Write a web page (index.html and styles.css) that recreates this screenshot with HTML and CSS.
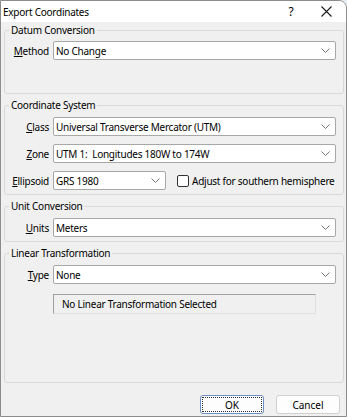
FILE: index.html
```html
<!DOCTYPE html>
<html lang="en">

<head>
    <meta charset="UTF-8">
    <meta name="viewport" content="width=device-width, initial-scale=1.0">
    <title>Export Coordinates</title>
    <link rel="stylesheet" href="styles.css">
</head>

<body>
    <div class="window">
        <div class="titlebar">
            <span class="title">Export Coordinates</span>
            <span class="help">?</span>
            <span class="close">
                <svg width="11" height="11" viewBox="0 0 11 11">
                    <path d="M0.5 0.5 L10.5 10.5 M10.5 0.5 L0.5 10.5" stroke="#1a1a1a" stroke-width="1.1" fill="none" />
                </svg>
            </span>
        </div>

        <div class="content">
            <fieldset class="group group-datum">
                <legend>Datum Conversion</legend>
                <div class="row">
                    <label><u>M</u>ethod</label>
                    <div class="combo">
                        <span>No Change</span>
                        <svg class="chev" width="9" height="5" viewBox="0 0 9 5"><path d="M0.5 0.5 L4.5 4.5 L8.5 0.5" stroke="#777" fill="none" /></svg>
                    </div>
                </div>
            </fieldset>

            <fieldset class="group">
                <legend>Coordinate System</legend>
                <div class="row">
                    <label><u>C</u>lass</label>
                    <div class="combo">
                        <span>Universal Transverse Mercator (UTM)</span>
                        <svg class="chev" width="9" height="5" viewBox="0 0 9 5"><path d="M0.5 0.5 L4.5 4.5 L8.5 0.5" stroke="#777" fill="none" /></svg>
                    </div>
                </div>
                <div class="row">
                    <label><u>Z</u>one</label>
                    <div class="combo">
                        <span>UTM 1:&nbsp; Longitudes 180W to 174W</span>
                        <svg class="chev" width="9" height="5" viewBox="0 0 9 5"><path d="M0.5 0.5 L4.5 4.5 L8.5 0.5" stroke="#777" fill="none" /></svg>
                    </div>
                </div>
                <div class="row">
                    <label><u>E</u>llipsoid</label>
                    <div class="combo combo-short">
                        <span>GRS 1980</span>
                        <svg class="chev" width="9" height="5" viewBox="0 0 9 5"><path d="M0.5 0.5 L4.5 4.5 L8.5 0.5" stroke="#777" fill="none" /></svg>
                    </div>
                    <div class="check">
                        <span class="box"></span>
                        <span>Ad<u>j</u>ust for southern hemisphere</span>
                    </div>
                </div>
            </fieldset>

            <fieldset class="group">
                <legend>Unit Conversion</legend>
                <div class="row">
                    <label><u>U</u>nits</label>
                    <div class="combo">
                        <span>Meters</span>
                        <svg class="chev" width="9" height="5" viewBox="0 0 9 5"><path d="M0.5 0.5 L4.5 4.5 L8.5 0.5" stroke="#777" fill="none" /></svg>
                    </div>
                </div>
            </fieldset>

            <fieldset class="group group-linear">
                <legend>Linear Transformation</legend>
                <div class="row">
                    <label><u>T</u>ype</label>
                    <div class="combo">
                        <span>None</span>
                        <svg class="chev" width="9" height="5" viewBox="0 0 9 5"><path d="M0.5 0.5 L4.5 4.5 L8.5 0.5" stroke="#777" fill="none" /></svg>
                    </div>
                </div>
                <div class="info">No Linear Transformation Selected</div>
            </fieldset>

            <div class="buttons">
                <button class="btn btn-default"><span>OK</span></button>
                <button class="btn">Cancel</button>
            </div>
        </div>
    </div>
</body>

</html>
```

FILE: styles.css
```css
html,
body {
    margin: 0;
    padding: 0;
    background: #e9ecef;
}

body {
    font-family: "Noto Sans", "Open Sans", sans-serif;
    font-size: 10px;
    letter-spacing: -0.25px;
    color: #000;
}

.window {
    width: 347px;
    height: 417px;
    box-sizing: border-box;
    background: #f0f0f0;
    border: 1px solid #8c8c8c;
    border-radius: 0 8px 0 0;
    display: flex;
    flex-direction: column;
    overflow: hidden;
}

.titlebar {
    height: 21px;
    background: #ffffff;
    display: flex;
    align-items: center;
    padding-left: 2px;
}

.title {
    flex: 1;
}

.help {
    width: 16px;
    text-align: center;
    margin-right: 22px;
    font-size: 12px;
}

.close {
    width: 11px;
    height: 11px;
    margin-right: 14px;
    display: flex;
}

.content {
    flex: 1;
    display: flex;
    flex-direction: column;
    padding: 0 2px 0 3px;
}

.group {
    margin: 1px 0 0 0;
    border: 1px solid #d9d9d9;
    border-radius: 3px;
    padding: 4px 7px 4px 0;
    min-width: 0;
}

.group + .group {
    margin-top: 4px;
}

.group legend {
    margin-left: 4px;
    padding: 0 2px;
    line-height: 15px;
}

.group-datum {
    padding-top: 3px;
    padding-bottom: 33px;
}

.group-linear {
    flex: 1;
}

.row {
    display: flex;
    align-items: center;
    height: 19px;
}

.row + .row {
    margin-top: 8px;
}

.row label {
    flex: none;
    width: 44px;
    text-align: right;
    margin-right: 4px;
    white-space: nowrap;
}

.combo {
    flex: 1;
    height: 19px;
    box-sizing: border-box;
    background: #ffffff;
    border: 1px solid #a8a8a8;
    border-radius: 2px;
    display: flex;
    align-items: center;
    padding: 0 5px 0 2px;
}

.combo span {
    flex: 1;
    white-space: nowrap;
}

.combo-short {
    flex: none;
    width: 113px;
}

.check {
    flex: none;
    display: flex;
    align-items: center;
    margin-left: 11px;
    white-space: nowrap;
}

.check .box {
    width: 10px;
    height: 10px;
    border: 1px solid #333;
    border-radius: 2px;
    background: #ffffff;
    margin-right: 3px;
}

.info {
    margin: 10px 0 0 48px;
    width: 263px;
    height: 20px;
    box-sizing: border-box;
    border-top: 1px solid #a0a0a0;
    border-left: 1px solid #a0a0a0;
    border-right: 1px solid #e0e0e0;
    border-bottom: 1px solid #e0e0e0;
    display: flex;
    align-items: center;
    padding-left: 8px;
}

.buttons {
    display: flex;
    justify-content: flex-end;
    gap: 12px;
    padding: 12px 4px 2px 0;
}

.btn {
    width: 64px;
    height: 19px;
    box-sizing: border-box;
    background: #fdfdfd;
    border: 1px solid #d0d0d0;
    border-radius: 3px;
    font-family: inherit;
    font-size: 10px;
    color: #000;
    padding: 0;
}

.btn-default {
    border: 1px solid #6b8fc2;
    padding: 1px;
}

.btn-default span {
    display: flex;
    align-items: center;
    justify-content: center;
    height: 100%;
    box-sizing: border-box;
    border: 1px dotted #333;
}
```
